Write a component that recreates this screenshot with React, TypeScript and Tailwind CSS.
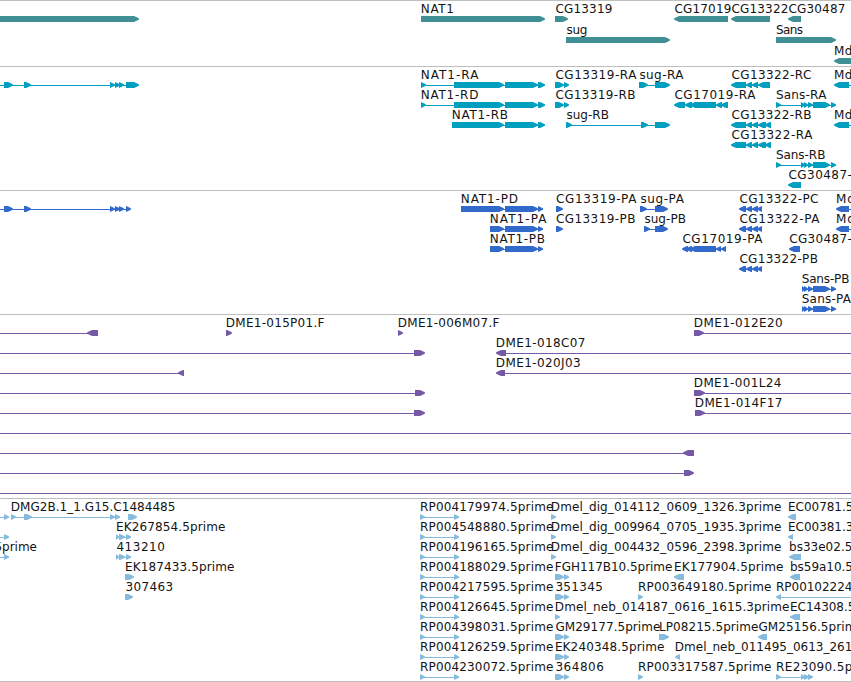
import React from "react";

type Span = [number, number];
type Feature = {
  label?: string;
  // label origin and right edge
  at?: number;
  to?: number;
  dir?: "f" | "r";
  line?: Span;
  exons?: Span[];
};
type Track = { name: string; color: string; height: number; pitch: number; rows: Feature[][] };

const f = (label: string, at: number, to: number | undefined, exons: Span[], line?: Span): Feature => ({ label, at, to, dir: "f", exons, line });
const r = (label: string, at: number, to: number | undefined, exons: Span[], line?: Span): Feature => ({ label, at, to, dir: "r", exons, line });
const bare = (dir: "f" | "r", exons: Span[], line?: Span): Feature => ({ dir, exons, line });

const natTail: Span[] = [[505, 538], [538, 545]];
const natProtein: Span[] = [[505, 538], [538, 543]];
const pair: Span[] = [[555, 564], [564, 569]];
const cg22: Span[] = [[731, 746], [746, 752], [752, 758], [758, 766], [765, 771]];
const cg22p: Span[] = [[739, 746], [746, 752], [752, 758], [757, 762]];
const sans: Span[] = [[776, 781], [801, 805], [804, 808], [808, 813], [813, 830], [831, 836]];
const sansP: Span[] = [[802, 805], [804, 808], [808, 813], [813, 830], [831, 836]];
const rp = (label: string) => f(label, 419.6, 553, [[420, 425], [454, 459]], [420, 459]);

const tracks: Track[] = [
  {
    name: "genes", color: "#408f94", height: 66, pitch: 21,
    rows: [
      [
        bare("f", [[0, 139]]),
        f("NAT1", 420.4, 453.6, [[421, 545]]),
        f("CG13319", 555, 612, [[555, 568]]),
        r("CG17019", 674, 731, [[674, 728]]),
        r("CG13322", 731, 788, [[731, 770]]),
        r("CG30487", 788, 845, [[788, 801]]),
      ],
      [f("sug", 566, 587, [[566, 670]]), f("Sans", 775.5, 802.5, [[776, 836]])],
      [r("Md", 833.5, 852, [[834, 860]])],
    ],
  },
  {
    name: "transcripts", color: "#009fc0", height: 124, pitch: 20,
    rows: [
      [
        bare("f", [[4, 13], [24, 31], [110, 115], [115, 120], [119, 124], [126, 139]], [0, 130]),
        f("NAT1-RA", 420.4, 478, [[421, 426], [454, 504], ...natTail], [421, 545]),
        f("CG13319-RA", 555, 636, pair),
        f("sug-RA", 639, 683, [[639, 648], [655, 670]], [639, 660]),
        r("CG13322-RC", 731, 811, [[731, 746], [746, 752], [752, 758], [758, 770]], [734, 768]),
        r("Md", 833.5, 852, [[834, 849]], [840, 851]),
      ],
      [
        f("NAT1-RD", 420.4, 478, [[421, 426], [454, 504], ...natTail], [421, 545]),
        f("CG13319-RB", 555, 635, pair),
        r("CG17019-RA", 674, 755, [[674, 685], [685, 692], [690, 716], [716, 722], [721, 728]], [676, 728]),
        f("Sans-RA", 775.5, 826, sans, [776, 836]),
      ],
      [
        f("NAT1-RB", 451.4, 507.6, [[452, 504], ...natTail], [452, 545]),
        f("sug-RB", 566, 608.5, [[566, 572], [641, 648], [655, 670]], [566, 660]),
        r("CG13322-RB", 731, 811, cg22, [734, 770]),
        r("Md", 833.5, 852, [[834, 849]], [840, 851]),
      ],
      [r("CG13322-RA", 731, 812, cg22, [734, 770])],
      [f("Sans-RB", 775.5, 825, sans, [776, 836])],
      [r("CG30487-", 788, 851.5, [[788, 801]])],
    ],
  },
  {
    name: "proteins", color: "#326acc", height: 124, pitch: 20,
    rows: [
      [
        bare("f", [[4, 13], [24, 31], [110, 115], [115, 120], [119, 124], [126, 131]], [0, 130]),
        f("NAT1-PD", 460.4, 517.6, [[461, 504], ...natProtein], [461, 543]),
        f("CG13319-PA", 555.6, 636, [[556, 563]]),
        f("sug-PA", 640, 683.5, [[640, 647], [655, 668]], [640, 660]),
        r("CG13322-PC", 739, 818, cg22p, [741, 762]),
        r("Md", 835.5, 854.5, [[836, 849]], [840, 851]),
      ],
      [
        f("NAT1-PA", 489.4, 546, [[490, 504], ...natProtein], [490, 543]),
        f("CG13319-PB", 555.6, 635, [[556, 563]]),
        f("sug-PB", 644, 685.5, [[644, 650], [655, 668]], [644, 660]),
        r("CG13322-PA", 739, 819, cg22p, [741, 762]),
        r("Md", 835.5, 854.5, [[836, 849]], [840, 851]),
      ],
      [
        f("NAT1-PB", 489.4, 544.5, [[490, 504], ...natProtein], [490, 543]),
        r("CG17019-PA", 682, 762, [[682, 688], [686, 692], [690, 716], [716, 721], [721, 726]], [684, 725]),
        r("CG30487-", 788.8, 851.5, [[789, 800]]),
      ],
      [r("CG13322-PB", 739, 817.5, cg22p, [741, 762])],
      [f("Sans-PB", 801.3, 849, sansP, [802, 836])],
      [f("Sans-PA", 801.3, 850.6, sansP, [802, 836])],
    ],
  },
  {
    name: "clones", color: "#7559a6", height: 184, pitch: 20,
    rows: [
      [
        bare("r", [[87, 98]], [0, 92]),
        f("DME1-015P01.F", 225.4, 324, [[226, 232]]),
        f("DME1-006M07.F", 397.4, 499, [[398, 403]]),
        f("DME1-012E20", 693.4, 782.2, [[694, 704]], [694, 851]),
      ],
      [bare("f", [[414, 425]], [0, 420]), r("DME1-018C07", 495.4, 585, [[496, 506]], [500, 851])],
      [bare("r", [[178, 184]], [0, 182]), r("DME1-020J03", 495.4, 580.2, [[496, 505]], [500, 851])],
      [bare("f", [[415, 425]], [0, 420]), f("DME1-001L24", 693.4, 781, [[694, 705]], [694, 851])],
      [bare("f", [[414, 425]], [0, 420]), f("DME1-014F17", 694.4, 782, [[695, 705]], [695, 851])],
      [bare("f", [], [0, 851])],
      [bare("r", [[683, 694]], [0, 690])],
      [bare("f", [[684, 694]], [0, 690])],
      [bare("f", [], [0, 851])],
    ],
  },
  {
    name: "ests", color: "#87bbdd", height: 183, pitch: 20,
    rows: [
      [
        bare("f", [[4, 9]], [0, 9]),
        f("DMG2B.1_1.G15.C1484485", 10.4, 175, [[11, 16], [24, 32], [110, 115], [115, 120], [128, 137]], [11, 120]),
        rp("RP004179974.5prime"),
        f("Dmel_dig_014112_0609_1326.3prime", 550.4, 781, [[551, 556]]),
        r("EC00781.5", 787.6, 853, [[788, 796]]),
      ],
      [
        bare("f", [[4, 9]], [0, 9]),
        f("EK267854.5prime", 115.6, 225, [[116, 119], [119, 125], [126, 131]], [116, 131]),
        rp("RP004548880.5prime"),
        f("Dmel_dig_009964_0705_1935.3prime", 550.4, 781, [[551, 556]]),
        r("EC00381.3", 787.6, 853, [[788, 793]]),
      ],
      [
        f("5prime", -6, 36.6, [[4, 9]], [0, 9]),
        f("413210", 116, 164.5, [[116, 119], [119, 125], [126, 131]], [116, 131]),
        rp("RP004196165.5prime"),
        f("Dmel_dig_004432_0596_2398.3prime", 550.4, 781, [[551, 556]]),
        r("bs33e02.5", 788.6, 852, [[789, 801]]),
      ],
      [
        f("EK187433.5prime", 124.6, 234, [[125, 134]]),
        rp("RP004188029.5prime"),
        f("FGH117B10.5prime", 554.4, 672, pair),
        r("EK177904.5prime", 673.6, 783, [[674, 684]]),
        r("bs59a10.5", 789.6, 852.5, [[790, 800]]),
      ],
      [
        f("307463", 125, 172.7, [[125, 133]]),
        rp("RP004217595.5prime"),
        f("351345", 555, 602.5, pair),
        f("RP003649180.5prime", 637.6, 771, [[638, 643]]),
        r("RP00102224", 775.6, 852, [[776, 781]], [779, 851]),
      ],
      [
        rp("RP004126645.5prime"),
        f("Dmel_neb_014187_0616_1615.3prime", 554.4, 789, [[555, 560]]),
        r("EC14308.5", 789.6, 855, [[790, 800]]),
      ],
      [
        rp("RP004398031.5prime"),
        f("GM29177.5prime", 555, 660, pair),
        f("LP08215.5prime", 658.6, 758, [[659, 669]]),
        r("GM25156.5prim", 758, 856, [[758, 767]]),
      ],
      [
        rp("RP004126259.5prime"),
        f("EK240348.5prime", 554.5, 664, pair),
        r("Dmel_neb_011495_0613_261", 674.4, 852, [[675, 680]]),
      ],
      [
        rp("RP004230072.5prime"),
        f("364806", 555, 603.5, pair),
        f("RP003317587.5prime", 637.6, 771, [[638, 643]]),
        f("RE23090.5p", 775.6, 852, [[776, 781], [801, 805], [804, 809], [808, 813]], [776, 812]),
      ],
    ],
  },
];

// An exon: a 6px bar whose leading end narrows to a blunt tip.
function arrow([a, b]: Span, dir: "f" | "r", y: number) {
  const head = Math.min(5, b - a);
  const tail = dir === "f" ? a : b;
  const tip = dir === "f" ? b : a;
  const s = dir === "f" ? -1 : 1;
  const neck = tip + s * head;
  const cheek = tip + s * head * 0.45;
  return `${tail},${y} ${neck},${y} ${cheek},${y + 1.2} ${tip},${y + 2.6} ${tip},${y + 3.6} ${cheek},${y + 4.8} ${neck},${y + 6} ${tail},${y + 6}`;
}

function TrackView({ track }: { track: Track }) {
  return (
    <section className="w-full shrink-0 overflow-hidden" style={{ height: track.height }}>
      <svg width="851" height={track.height} className="block" aria-label={track.name}>
        <rect width="851" height="1" fill="#bebebe" />
        {track.rows.map((row, i) => {
          const y = i * track.pitch;
          return (
            <g key={i}>
              {row.map((feat, j) => (
                <g key={j}>
                  {feat.line && (
                    <rect x={feat.line[0]} y={y + 19} width={feat.line[1] - feat.line[0]} height="1" fill={track.color} />
                  )}
                  {feat.exons?.map((e, k) => (
                    <polygon key={k} points={arrow(e, feat.dir ?? "f", y + 16)} fill={track.color} />
                  ))}
                  {feat.label && feat.at !== undefined && (
                    <text
                      x={feat.at + 0.4}
                      y={y + 13}
                      textLength={feat.to !== undefined ? feat.to - feat.at : undefined}
                      lengthAdjust="spacing"
                      fill="#141414"
                    >
                      {feat.label}
                    </text>
                  )}
                </g>
              ))}
            </g>
          );
        })}
      </svg>
    </section>
  );
}

export default function App() {
  return (
    <main className="flex h-[682px] w-[851px] flex-col overflow-hidden bg-white font-['DejaVu_Sans',sans-serif] text-xs">
      {tracks.map((t) => (
        <TrackView key={t.name} track={t} />
      ))}
      <div className="h-px w-full shrink-0 bg-[#bebebe]" />
    </main>
  );
}
